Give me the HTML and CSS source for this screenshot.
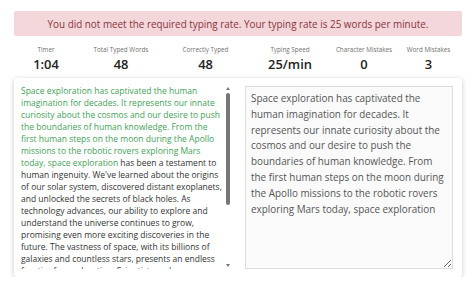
FILE: index.html
```html
<!DOCTYPE html>
<html lang="en">
<head>
  <meta charset="UTF-8" />
  <meta name="viewport" content="width=device-width, initial-scale=1.0" />
  <title>Typing Test</title>
  <link rel="stylesheet" href="styles.css">
</head>
<body>

  <div id="main">
    <div class="alert">You did not meet the required typing rate. Your typing rate is 25 words per minute.</div>

    <div class="stats">
      <div class="stat">
        <span class="stat-label">Timer</span>
        <span class="stat-value">1:04</span>
      </div>
      <div class="stat">
        <span class="stat-label">Total Typed Words</span>
        <span class="stat-value">48</span>
      </div>
      <div class="stat">
        <span class="stat-label">Correctly Typed</span>
        <span class="stat-value">48</span>
      </div>
      <div class="stat">
        <span class="stat-label">Typing Speed</span>
        <span class="stat-value">25/min</span>
      </div>
      <div class="stat">
        <span class="stat-label">Character Mistakes</span>
        <span class="stat-value">0</span>
      </div>
      <div class="stat">
        <span class="stat-label">Word Mistakes</span>
        <span class="stat-value">3</span>
      </div>
    </div>

    <div class="test-card">
      <div class="passage-box">
        <div class="passage"><span class="typed">Space exploration has captivated the human imagination for decades. It represents our innate curiosity about the cosmos and our desire to push the boundaries of human knowledge. From the first human steps on the moon during the Apollo missions to the robotic rovers exploring Mars today, space exploration</span> has been a testament to human ingenuity. We've learned about the origins of our solar system, discovered distant exoplanets, and unlocked the secrets of black holes. As technology advances, our ability to explore and understand the universe continues to grow, promising even more exciting discoveries in the future. The vastness of space, with its billions of galaxies and countless stars, presents an endless frontier for exploration. Scientists and astronomers continue to study the skies, searching for answers to questions that have puzzled humanity for centuries.</div>
        <div class="scrollbar">
          <span class="arrow-up"></span>
          <div class="track"><div class="thumb"></div></div>
          <span class="arrow-down"></span>
        </div>
      </div>

      <textarea class="typing-input" readonly>Space exploration has captivated the human imagination for decades. It represents our innate curiosity about the cosmos and our desire to push the boundaries of human knowledge. From the first human steps on the moon during the Apollo missions to the robotic rovers exploring Mars today, space exploration</textarea>
    </div>
  </div>

</body>
</html>
```
FILE: styles.css
```css
body {
  margin: 0;
  font-family: "Open Sans", "Noto Sans", sans-serif;
  background-color: #fff;
}

#main {
  padding: 11px 12px 0 14px;
}

.alert {
  height: 25px;
  display: flex;
  justify-content: center;
  align-items: center;
  background-color: #f4d7da;
  color: #893440;
  font-size: 9.9px;
  border-radius: 2px;
}

.stats {
  display: grid;
  grid-template-columns: 64px 86px 83px 86px 62px 67px;
  margin-top: 10px;
  text-align: center;
}

.stat {
  display: flex;
  flex-direction: column;
  align-items: center;
}

.stat-label {
  font-size: 6.3px;
  line-height: 8px;
  color: #707070;
}

.stat-value {
  font-size: 12.9px;
  font-weight: 600;
  line-height: 16px;
  margin-top: 2px;
  color: #222;
}

.test-card {
  display: flex;
  gap: 15px;
  height: 199px;
  box-sizing: border-box;
  margin-top: 6px;
  padding: 7px 9px 8px 7px;
  background-color: #fff;
  border-radius: 3px;
  box-shadow: 0 1px 5px rgba(0, 0, 0, 0.22);
}

.passage-box {
  display: flex;
  gap: 1px;
  width: 209px;
  height: 184px;
}

.passage {
  width: 204px;
  overflow: hidden;
  font-size: 8.5px;
  line-height: 12px;
  color: #333;
}

.passage .typed {
  color: #45a05a;
}

.scrollbar {
  width: 5px;
  display: flex;
  flex-direction: column;
  align-items: center;
}

.arrow-up,
.arrow-down {
  width: 0;
  height: 0;
  border-left: 2px solid transparent;
  border-right: 2px solid transparent;
}

.arrow-up {
  margin-top: 2px;
  border-bottom: 3px solid #777;
}

.arrow-down {
  margin-bottom: 2px;
  border-top: 3px solid #777;
}

.track {
  flex: 1;
  width: 100%;
  padding: 3px 0;
}

.thumb {
  height: 112px;
  width: 4px;
  margin: 0 auto;
  background-color: #767676;
  border-radius: 2px;
}

.typing-input {
  width: 208px;
  height: 183px;
  box-sizing: border-box;
  margin: 1px 0 0;
  padding: 4px 5px;
  font-family: inherit;
  font-size: 9.9px;
  line-height: 15.8px;
  color: #555;
  background-color: #fafafa;
  border: 1px solid #ddd;
  border-radius: 0;
  outline: none;
  overflow: hidden;
}
```
